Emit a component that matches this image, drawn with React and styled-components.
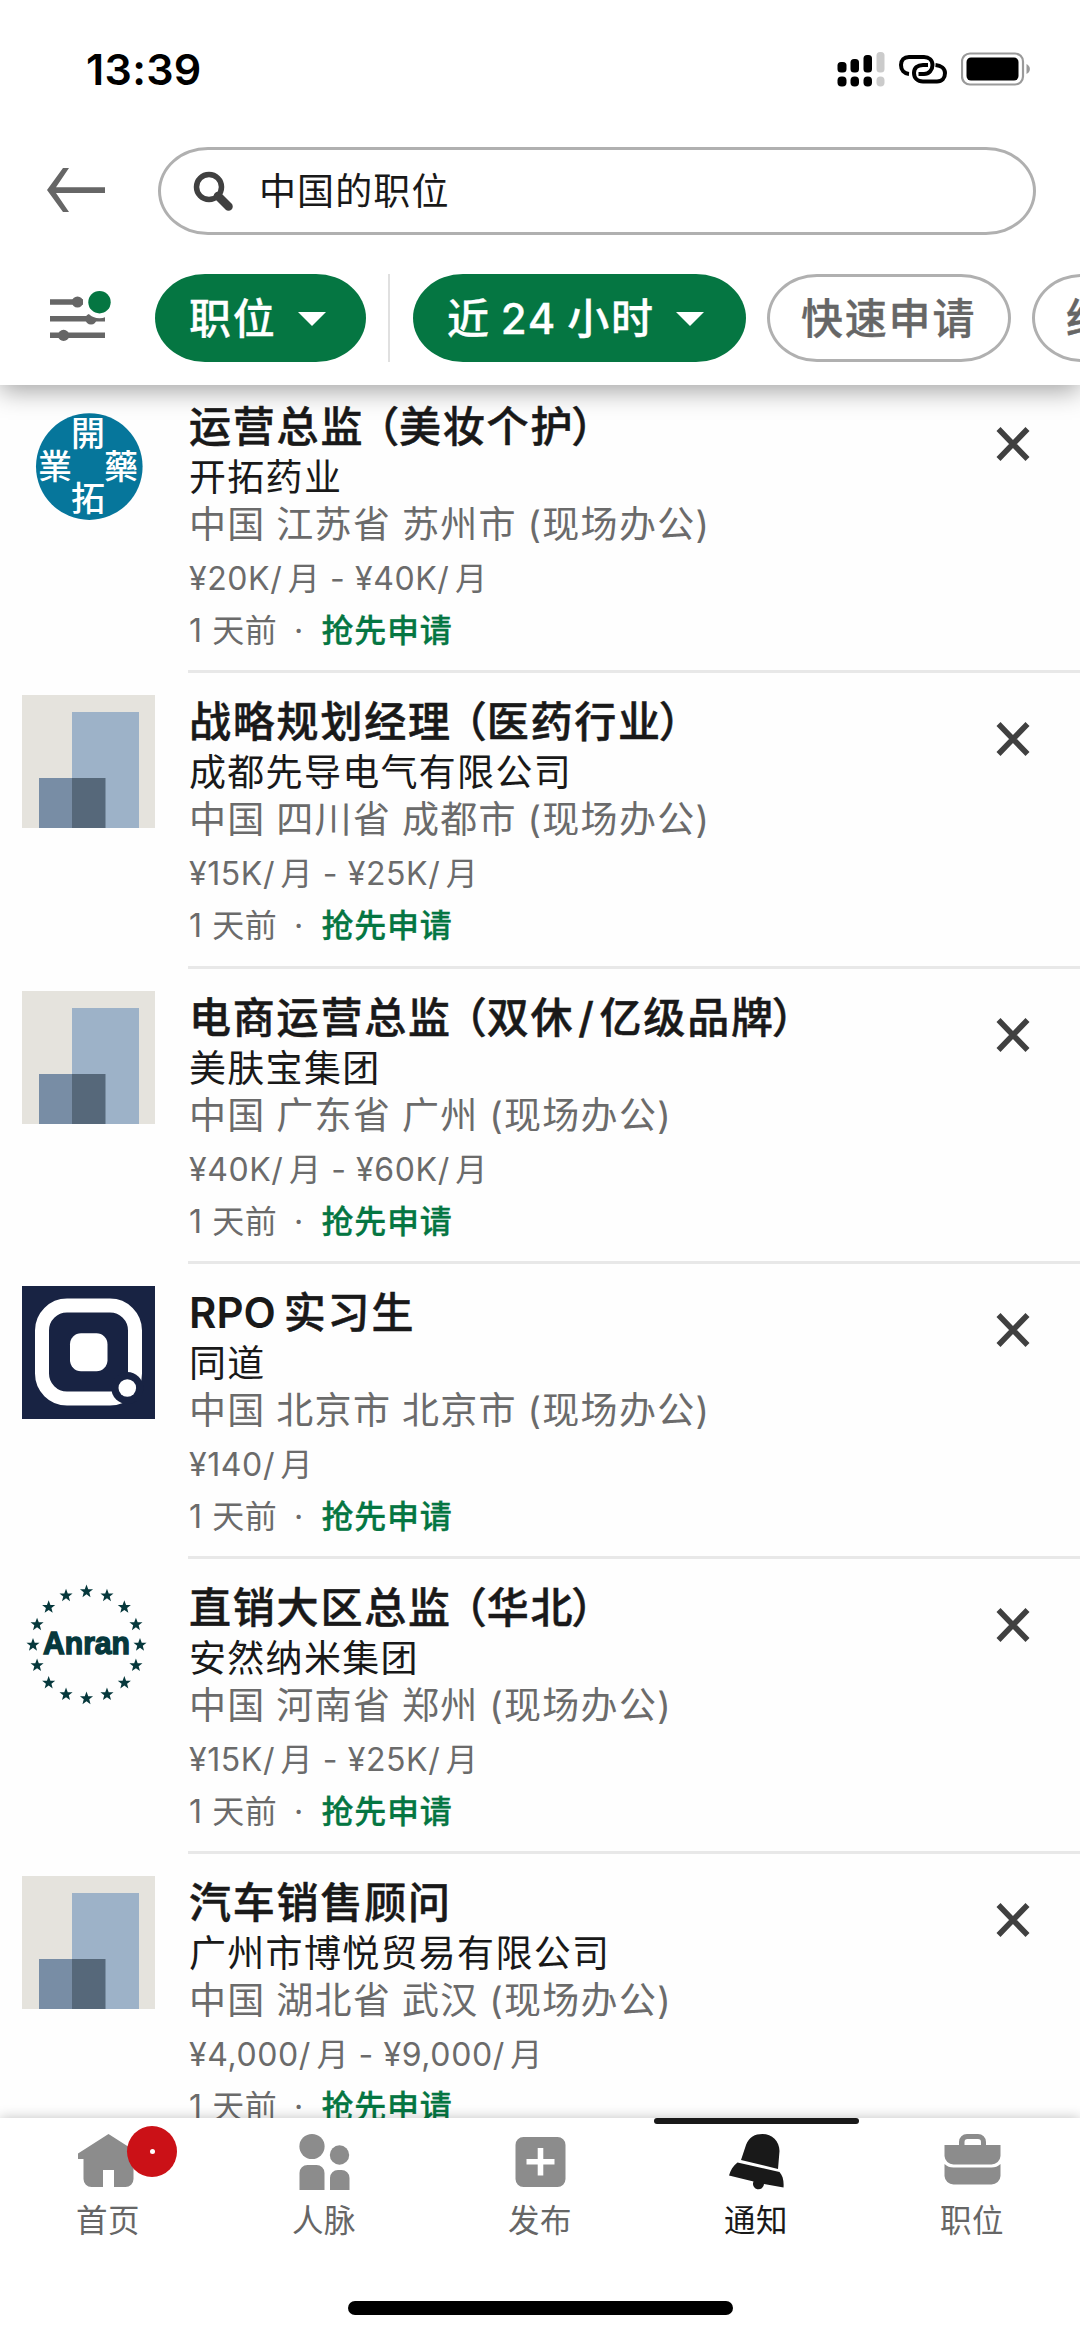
import React from "react";
import styled, { createGlobalStyle, css } from "styled-components";

const GlobalStyle = createGlobalStyle`
  * {
    box-sizing: border-box;
  }

  body {
    margin: 0;
    background: #ffffff;
    font-family: Inter, "Noto Sans CJK SC", sans-serif;
  }
`;

const Screen = styled.div`
  display: flex;
  flex-direction: column;
  width: 1080px;
  height: 2337px;
  overflow: hidden;
  background: #fefefe;
`;

const Header = styled.header`
  flex: none;
  height: 385px;
  background: #ffffff;
  box-shadow: 0 6px 24px rgba(0, 0, 0, 0.36);
  z-index: 2;
`;

const StatusBar = styled.div`
  display: flex;
  justify-content: space-between;
  align-items: center;
  height: 137px;
  padding: 0 49px 0 86px;
`;

const Clock = styled.span`
  font-size: 43px;
  font-weight: 600;
  line-height: 52px;
  letter-spacing: 0.3px;
  color: #000000;
`;

const StatusIcons = styled.div`
  display: flex;
  align-items: center;
  gap: 13px;
`;

const SearchRow = styled.div`
  display: flex;
  align-items: center;
  height: 108px;
  padding: 0 44px 0 46px;
`;

const BackButton = styled.button`
  display: flex;
  width: 112px;
  padding: 0;
  border: 0;
  background: none;
`;

const SearchBox = styled.div`
  display: flex;
  align-items: center;
  flex: 1;
  height: 88px;
  padding-left: 32px;
  border: 3px solid #b0b0b0;
  border-radius: 50px / 44px;
`;

const SearchText = styled.span`
  margin-left: 25px;
  padding-top: 2px;
  font-size: 37px;
  line-height: 50px;
  letter-spacing: 1.1px;
  color: #191919;
`;

const FilterRow = styled.div`
  display: flex;
  align-items: center;
  height: 146px;
  padding-left: 46px;
  overflow: hidden;
`;

const FilterButton = styled.button`
  display: flex;
  flex: none;
  width: 109px;
  padding: 0;
  border: 0;
  background: none;
`;

const Chip = styled.button`
  display: flex;
  align-items: center;
  flex: none;
  gap: 21px;
  width: ${({ $width }) => $width}px;
  height: 88px;
  margin-right: 21px;
  padding: 2px 0 0 34px;
  border: 0;
  border-radius: 50px / 44px;
  font-family: inherit;
  font-size: 42px;
  font-weight: 500;
  line-height: 60px;
  letter-spacing: 1.8px;
  word-spacing: -3px;
  white-space: nowrap;
  color: #ffffff;
  background: #057642;
  -webkit-text-stroke: 0.3px currentColor;

  ${({ $outline }) =>
    $outline &&
    css`
      padding-left: 31px;
      border: 3px solid #b0b0b0;
      color: #666666;
      background: #ffffff;
    `}
`;

const ChipDivider = styled.div`
  flex: none;
  width: 2px;
  height: 88px;
  margin: 0 23px 0 1px;
  background: #e0e0e0;
`;

const List = styled.main`
  flex: 1;
  min-height: 0;
  overflow: hidden;
`;

const Job = styled.article`
  display: flex;
  height: 295.25px;
  padding: 22px 0 0 22px;

  &:first-child {
    margin-top: -7px;
  }
`;

const Logo = styled.div`
  flex: none;
  width: 133px;
  height: 133px;
  margin-right: 33px;
`;

const JobBody = styled.div`
  display: flex;
  flex: 1;
  justify-content: space-between;
  border-bottom: 3px solid #e8e8e8;
`;

const JobInfo = styled.div`
  display: flex;
  flex-direction: column;
  padding-left: 1px;
  white-space: nowrap;
`;

const OpenParen = styled.span`
  margin: 0 -2px 0 -7px;
`;

const CloseParen = styled.span`
  margin-left: -3px;
`;

const Slash = styled.span`
  margin-right: 5.5px;
`;

const Latin = styled.span`
  margin-right: 8px;
  font-weight: 600;
  letter-spacing: 0;
  -webkit-text-stroke: 0;
`;

const Title = styled.h2`
  margin: 0;
  font-size: 42px;
  font-weight: 500;
  line-height: 54px;
  letter-spacing: 1.8px;
  color: #191919;
  -webkit-text-stroke: 0.5px currentColor;

  ${Slash} {
    margin: 0 4px;
  }
`;

const Company = styled.span`
  font-size: 37px;
  line-height: 48px;
  letter-spacing: 1.3px;
  color: #191919;
`;

const Place = styled.span`
  margin-top: -1px;
  font-size: 37px;
  line-height: 48px;
  letter-spacing: 1.3px;
  word-spacing: -1px;
  color: #6b6b6b;
`;

const Salary = styled.span`
  margin-top: 4px;
  font-size: 32px;
  line-height: 52px;
  letter-spacing: 0.6px;
  color: #6b6b6b;
`;

const Posted = styled.span`
  font-size: 32px;
  line-height: 52px;
  letter-spacing: 0.6px;
  color: #6b6b6b;
`;

const Dot = styled.span`
  margin: 0 8px 0 7px;
`;

const Apply = styled.b`
  font-weight: 500;
  letter-spacing: 0.8px;
  color: #057642;
  -webkit-text-stroke: 0.3px currentColor;
`;

const CloseButton = styled.button`
  align-self: flex-start;
  display: flex;
  margin: 27px 50px 0 0;
  padding: 0;
  border: 0;
  background: none;
`;

const BottomBar = styled.footer`
  flex: none;
  height: 219px;
  background: #ffffff;
  box-shadow: 0 0 12px rgba(0, 0, 0, 0.24);
  z-index: 2;
`;

const Tabs = styled.nav`
  display: flex;
  height: 183px;
`;

const Tab = styled.div`
  position: relative;
  display: flex;
  flex: 1;
  flex-direction: column;
  align-items: center;
  font-size: 31.5px;
  line-height: 44px;
  letter-spacing: 0.6px;
  color: ${({ $active }) => ($active ? "#191919" : "#666666")};
`;

const TabMark = styled.div`
  width: 205px;
  height: 6px;
  border-radius: 3px;
  background: ${({ $active }) => ($active ? "#191919" : "transparent")};
`;

const TabIcon = styled.svg`
  margin: 7px 0 6px;
  fill: ${({ $active }) => ($active ? "#191919" : "#8c8c8c")};
`;

const Badge = styled.span`
  position: absolute;
  top: 8px;
  left: 127px;
  display: flex;
  align-items: center;
  justify-content: center;
  width: 50px;
  height: 51px;
  border-radius: 50%;
  background: #cb1117;

  &::after {
    content: "";
    width: 5px;
    height: 5px;
    border-radius: 50%;
    background: #ffffff;
  }
`;

const HomeIndicator = styled.div`
  width: 385px;
  height: 14px;
  margin: 0 auto;
  border-radius: 7px;
  background: #000000;
`;

const Signal = () => (
  <svg width="48" height="36" viewBox="0 0 48 36">
    <rect x="0.5" y="11" width="9" height="10.5" rx="3.5" />
    <rect x="13.5" y="8" width="8.5" height="13.5" rx="3.5" />
    <rect x="26.5" y="4" width="8.5" height="17.5" rx="3.5" />
    <rect x="39.5" y="1" width="8" height="20.5" rx="3.5" fill="#cbcbcb" />
    <rect x="0.5" y="25.5" width="9" height="10" rx="4" />
    <rect x="13.5" y="25.5" width="8.5" height="10" rx="4" />
    <rect x="26.5" y="25.5" width="8.5" height="10" rx="4" />
    <rect x="39.5" y="25.5" width="8" height="10" rx="4" fill="#cbcbcb" />
  </svg>
);

const Link = () => (
  <svg width="50" height="30" viewBox="0 0 50 30" fill="none" stroke="#000" strokeWidth="4">
    <path d="M11 20C6 19.5 3 16 3 11C3 6 6 3 11 3H26C31 3 34.5 6 34.500 11C34.5 16 31 20 26 20H20.500" />
    <path d="M37.500 11C43 11.5 47 14.500 47 19C47 24 44 27.500 39 27.500H25C19.500 27.500 16 24 16 19C16 14 19.500 11 25 11H30" />
  </svg>
);

const Battery = () => (
  <svg width="70" height="34" viewBox="0 0 70 34">
    <rect x="1" y="1.5" width="61" height="31" rx="8" fill="none" stroke="#9a9a9a" strokeWidth="2.2" />
    <rect x="5.5" y="5.5" width="52" height="23" rx="4.5" />
    <path d="M65.500 12C70 14 70 20 65.500 22Z" fill="#9a9a9a" />
  </svg>
);

const BackArrow = () => (
  <svg width="60" height="46" viewBox="0 0 60 46">
    <path d="M17 0H23L10 19.300H59V25H10L23 44H17L1 22Z" fill="#666666" />
  </svg>
);

const Magnifier = () => (
  <svg width="41" height="41" viewBox="0 0 41 41" fill="none" stroke="#404040">
    <circle cx="16" cy="16" r="12.5" strokeWidth="5.5" />
    <path d="M25 25L35.500 35.500" strokeWidth="8.5" strokeLinecap="round" />
  </svg>
);

const Sliders = () => (
  <svg width="68" height="60" viewBox="0 0 68 60" fill="#666666">
    <path d="M4 11.300h33v5.500H4zM4 28h55v5.500H4zM4 44.600h55v5.500H4z" />
    <circle cx="31.5" cy="14" r="5.6" />
    <circle cx="45" cy="31" r="5.6" />
    <circle cx="17.6" cy="47.4" r="5.6" />
    <circle cx="53.5" cy="14.2" r="16" fill="#ffffff" />
    <circle cx="53.5" cy="14.2" r="11.2" fill="#057642" />
  </svg>
);

const Caret = () => (
  <svg width="28" height="14" viewBox="0 0 28 14">
    <path d="M0 0H28L14 14Z" fill="#ffffff" />
  </svg>
);

const Cross = () => (
  <svg width="34" height="34" viewBox="0 0 34 34" stroke="#404040" strokeWidth="5.6">
    <path d="M2.500 2L31.500 32M31.500 2L2.500 32" />
  </svg>
);

const SealLogo = () => (
  <svg
    width="133"
    height="133"
    viewBox="0 0 133 133"
    fill="#ffffff"
    fontFamily="'Noto Sans CJK TC', sans-serif"
    fontSize="34"
    fontWeight="500"
    textAnchor="middle"
  >
    <circle cx="67.3" cy="66.6" r="53.3" fill="#06769b" />
    <text x="66" y="46">開</text>
    <text x="33" y="79">業</text>
    <text x="99" y="79">藥</text>
    <text x="66" y="111">拓</text>
  </svg>
);

const BlankLogo = () => (
  <svg width="133" height="133" viewBox="0 0 133 133">
    <path d="M0 0H133V133H0Z" fill="#e5e3dd" />
    <path d="M50 17H117V133H50Z" fill="#9db2c8" />
    <path d="M17 83H50V133H17Z" fill="#788da5" />
    <path d="M50 83H83.500V133H50Z" fill="#56687a" />
  </svg>
);

const QLogo = () => (
  <svg width="133" height="133" viewBox="0 0 133 133">
    <path d="M0 0H133V133H0Z" fill="#182343" />
    <rect x="20" y="19.6" width="93" height="93" rx="25" fill="none" stroke="#ffffff" strokeWidth="14" />
    <rect x="48" y="47.3" width="37.5" height="38" rx="11" fill="#ffffff" />
    <circle cx="105.3" cy="102" r="16" fill="#182343" />
    <circle cx="105.3" cy="102" r="8.8" fill="#ffffff" />
  </svg>
);

const STARS = Array.from({ length: 16 }, (_, i) => (i * Math.PI) / 8);

const StarLogo = () => (
  <svg width="133" height="133" viewBox="0 0 133 133" fill="#06383c">
    {STARS.map((a) => (
      <path
        key={a}
        transform={`translate(${64.5 + 53.5 * Math.sin(a)} ${64 - 53.5 * Math.cos(a)}) scale(1.15)`}
        d="M0-6L1.500-1.900L5.700-1.900L2.400 0.700L3.500 4.900L0 2.400L-3.500 4.900L-2.400 0.700L-5.700-1.900L-1.500-1.900Z"
      />
    ))}
    <text
      x="64.5"
      y="72.5"
      textAnchor="middle"
      textLength="87"
      lengthAdjust="spacingAndGlyphs"
      fontFamily="'Liberation Sans', sans-serif"
      fontSize="32"
      fontWeight="700"
      stroke="#06383c"
      strokeWidth="1.4"
    >
      Anran
    </text>
  </svg>
);

const logos = {
  seal: SealLogo,
  blank: BlankLogo,
  q: QLogo,
  star: StarLogo,
};

const jobs = [
  {
    logo: "seal",
    title: "运营总监（美妆个护）",
    company: "开拓药业",
    place: "中国 江苏省 苏州市 (现场办公)",
    salary: "¥20K/月 - ¥40K/月",
  },
  {
    logo: "blank",
    title: "战略规划经理（医药行业）",
    company: "成都先导电气有限公司",
    place: "中国 四川省 成都市 (现场办公)",
    salary: "¥15K/月 - ¥25K/月",
  },
  {
    logo: "blank",
    title: "电商运营总监（双休/亿级品牌）",
    company: "美肤宝集团",
    place: "中国 广东省 广州 (现场办公)",
    salary: "¥40K/月 - ¥60K/月",
  },
  {
    logo: "q",
    title: "RPO实习生",
    company: "同道",
    place: "中国 北京市 北京市 (现场办公)",
    salary: "¥140/月",
  },
  {
    logo: "star",
    title: "直销大区总监（华北）",
    company: "安然纳米集团",
    place: "中国 河南省 郑州 (现场办公)",
    salary: "¥15K/月 - ¥25K/月",
  },
  {
    logo: "blank",
    title: "汽车销售顾问",
    company: "广州市博悦贸易有限公司",
    place: "中国 湖北省 武汉 (现场办公)",
    salary: "¥4,000/月 - ¥9,000/月",
  },
];

const tabs = [
  {
    label: "首页",
    badge: true,
    icon: <path d="M30.500 3L61 22.500V28H55.500V48a8 8 0 0 1-8 8H36V39H25V56H13.500a8 8 0 0 1-8-8V28H0V22.500Z" />,
  },
  {
    label: "人脉",
    icon: (
      <>
        <circle cx="18" cy="15.5" r="12.6" />
        <circle cx="45.5" cy="24" r="9.7" />
        <path d="M5.500 59V42a8 8 0 0 1 8-8h9a8 8 0 0 1 8 8V59ZM36 59V47a8 8 0 0 1 8-8h3.500a8 8 0 0 1 8 8V59Z" />
      </>
    ),
  },
  {
    label: "发布",
    icon: (
      <path
        fillRule="evenodd"
        d="M13.500 6H47.500a8 8 0 0 1 8 8V48a8 8 0 0 1-8 8H13.500a8 8 0 0 1-8-8V14a8 8 0 0 1 8-8ZM27.700 17V28H16.500V33.500H27.700V44.500H33.300V33.500H44.500V28H33.300V17Z"
      />
    ),
  },
  {
    label: "通知",
    active: true,
    icon: (
      <path d="M15 29L20 14C23 6 29 3 36.500 3C46 3 53.500 10 53.500 20L52 38ZM11.500 31.500L53.500 41C57 45 58 50 57.500 56.500L38 53A5.500 5.500 0 1 1 27.500 50.500L3 44.500C4.500 39 7 35 11.500 31.500Z" />
    ),
  },
  {
    label: "职位",
    icon: (
      <>
        <path
          fillRule="evenodd"
          d="M17 14V11a8 8 0 0 1 8-8H36a8 8 0 0 1 8 8V14H58.500V25a9 9 0 0 1-9 8.500H11.500a9 9 0 0 1-9-8.500V14ZM22.500 14H39V11a3 3 0 0 0-3-3H25.500a3 3 0 0 0-3 3Z"
        />
        <path d="M2.500 33C5 35.500 8 36.500 11.500 36.500H49.500C53 36.500 56 35.500 58.500 33V45a9 9 0 0 1-9 8.500H11.500a9 9 0 0 1-9-8.500Z" />
      </>
    ),
  },
];

// evens out the gaps round brackets, slashes and Latin words
const spaceText = (text) =>
  text.split(/(（|）|\/|[A-Z]{2,})/).map((part, i) => {
    if (i % 2 === 0) return part;
    if (part === "（") return <OpenParen key={i}>{part}</OpenParen>;
    if (part === "）") return <CloseParen key={i}>{part}</CloseParen>;
    if (part === "/") return <Slash key={i}>{part}</Slash>;
    return <Latin key={i}>{part}</Latin>;
  });

function JobRow({ job }) {
  const LogoImage = logos[job.logo];

  return (
    <Job>
      <Logo>
        <LogoImage />
      </Logo>
      <JobBody>
        <JobInfo>
          <Title>{spaceText(job.title)}</Title>
          <Company>{job.company}</Company>
          <Place>{job.place}</Place>
          <Salary>{spaceText(job.salary)}</Salary>
          <Posted>
            1 天前<Dot> · </Dot>
            <Apply>抢先申请</Apply>
          </Posted>
        </JobInfo>
        <CloseButton>
          <Cross />
        </CloseButton>
      </JobBody>
    </Job>
  );
}

export default function App() {
  return (
    <>
      <GlobalStyle />
      <Screen>
        <Header>
          <StatusBar>
            <Clock>13:39</Clock>
            <StatusIcons>
              <Signal />
              <Link />
              <Battery />
            </StatusIcons>
          </StatusBar>
          <SearchRow>
            <BackButton>
              <BackArrow />
            </BackButton>
            <SearchBox>
              <Magnifier />
              <SearchText>中国的职位</SearchText>
            </SearchBox>
          </SearchRow>
          <FilterRow>
            <FilterButton>
              <Sliders />
            </FilterButton>
            <Chip $width={211}>
              职位
              <Caret />
            </Chip>
            <ChipDivider />
            <Chip $width={333}>
              近 24 小时
              <Caret />
            </Chip>
            <Chip $width={244} $outline>
              快速申请
            </Chip>
            <Chip $width={244} $outline>
              经验级别
            </Chip>
          </FilterRow>
        </Header>
        <List>
          {jobs.map((job) => (
            <JobRow key={job.title} job={job} />
          ))}
        </List>
        <BottomBar>
          <Tabs>
            {tabs.map(({ label, icon, active, badge }) => (
              <Tab key={label} $active={active}>
                <TabMark $active={active} />
                <TabIcon $active={active} width="61" height="62" viewBox="0 0 61 62">
                  {icon}
                </TabIcon>
                {label}
                {badge && <Badge />}
              </Tab>
            ))}
          </Tabs>
          <HomeIndicator />
        </BottomBar>
      </Screen>
    </>
  );
}
